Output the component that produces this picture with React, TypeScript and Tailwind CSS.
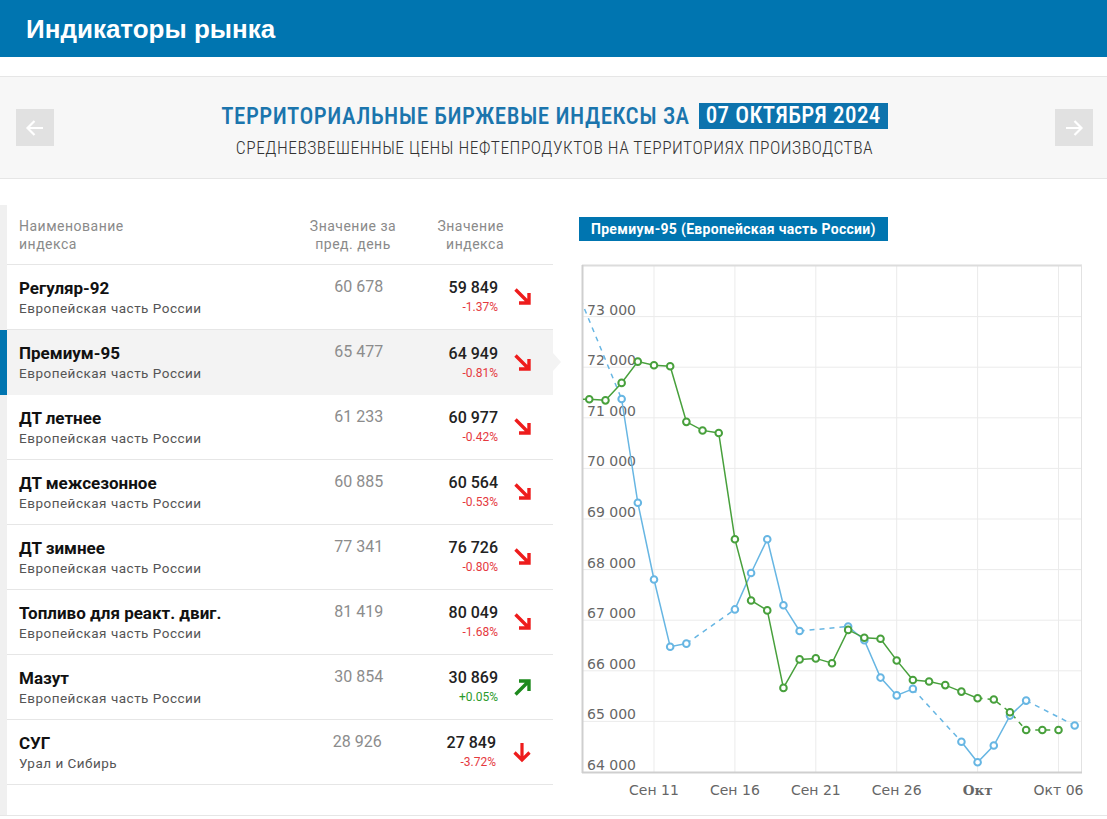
import React from "react";

type Row = {
  name: string;
  sub: string;
  prev: string;
  val: string;
  pct: string;
  dir: "dr" | "ur" | "d";
  active?: boolean;
};

const rows: Row[] = [
  { name: "Регуляр-92", sub: "Европейская часть России", prev: "60 678", val: "59 849", pct: "-1.37%", dir: "dr" },
  { name: "Премиум-95", sub: "Европейская часть России", prev: "65 477", val: "64 949", pct: "-0.81%", dir: "dr", active: true },
  { name: "ДТ летнее", sub: "Европейская часть России", prev: "61 233", val: "60 977", pct: "-0.42%", dir: "dr" },
  { name: "ДТ межсезонное", sub: "Европейская часть России", prev: "60 885", val: "60 564", pct: "-0.53%", dir: "dr" },
  { name: "ДТ зимнее", sub: "Европейская часть России", prev: "77 341", val: "76 726", pct: "-0.80%", dir: "dr" },
  { name: "Топливо для реакт. двиг.", sub: "Европейская часть России", prev: "81 419", val: "80 049", pct: "-1.68%", dir: "dr" },
  { name: "Мазут", sub: "Европейская часть России", prev: "30 854", val: "30 869", pct: "+0.05%", dir: "ur" },
  { name: "СУГ", sub: "Урал и Сибирь", prev: "28 926", val: "27 849", pct: "-3.72%", dir: "d" },
];

function Arrow({ dir }: { dir: Row["dir"] }) {
  if (dir === "ur") {
    return (
      <svg width="20" height="20" viewBox="0 0 20 20">
        <path d="M2.5 17.5 L15.5 4.5 M6 4 H16 V14" fill="none" stroke="#1e8a1e" strokeWidth="3.4" />
      </svg>
    );
  }
  if (dir === "d") {
    return (
      <svg width="22" height="22" viewBox="0 0 22 22">
        <path d="M11 2 V19 M3.5 11.5 L11 19 L18.5 11.5" fill="none" stroke="#ee1c1c" strokeWidth="3.2" />
      </svg>
    );
  }
  return (
    <svg width="20" height="20" viewBox="0 0 20 20">
      <path d="M2.5 2.5 L15.5 15.5 M16 6 V16 H6" fill="none" stroke="#ee1c1c" strokeWidth="3.4" />
    </svg>
  );
}

const X = (d: number) => 654 + (d - 11) * 16.18;
const Y = (v: number) => 772 - (v - 64000) * 0.0506;

type P = [number, number];

const blueSegs: P[][] = [
  [[9, 71371], [10, 69322], [11, 67804], [12, 66476], [13, 66537]],
  [[16, 67213], [17, 67933], [18, 68600], [19, 67294], [20, 66786]],
  [[23, 66875], [24, 66605], [25, 65866], [26, 65514], [27, 65642]],
  [[30, 64599], [31, 64192], [32, 64523], [33, 65115], [34, 65411]],
];
const blueDash: [P, P][] = [
  [[6, 73700], [9, 71371]],
  [[13, 66537], [16, 67213]],
  [[20, 66786], [23, 66875]],
  [[27, 65642], [30, 64599]],
  [[34, 65411], [37, 64920]],
];
const blueMarks: P[] = [...blueSegs.flat(), [37, 64920]];

const greenSolid: P[] = [
  [6, 71366], [7, 71366], [8, 71345], [9, 71690], [10, 72110], [11, 72040], [12, 72020],
  [13, 70920], [14, 70750], [15, 70700], [16, 68600], [17, 67389], [18, 67194], [19, 65662],
  [20, 66225], [21, 66245], [22, 66150], [23, 66808], [24, 66652], [25, 66632], [26, 66205],
  [27, 65818], [28, 65790], [29, 65717], [30, 65589], [31, 65458],
];
const greenDashed: P[] = [[31, 65458], [32, 65433], [33, 65182], [34, 64830], [35, 64830], [36, 64830]];
const greenMarks: P[] = [...greenSolid.slice(1), ...greenDashed.slice(1)];

const pathOf = (pts: P[]) => pts.map((p, i) => `${i ? "L" : "M"}${X(p[0]).toFixed(1)} ${Y(p[1]).toFixed(1)}`).join(" ");

function Chart() {
  const hLines = [65000, 66000, 67000, 68000, 69000, 70000, 71000, 72000, 73000];
  const yLabels = [64000, 65000, 66000, 67000, 68000, 69000, 70000, 71000, 72000, 73000];
  const vLines: [number, string, boolean][] = [
    [11, "Сен 11", false],
    [16, "Сен 16", false],
    [21, "Сен 21", false],
    [26, "Сен 26", false],
    [31, "Окт", true],
    [36, "Окт 06", false],
  ];
  const fmt = (v: number) => `${Math.floor(v / 1000)} 000`;
  const blue = "#67b6e3";
  const green = "#48a03c";
  return (
    <svg width="537" height="560" viewBox="0 0 537 560" className="block">
      <defs>
        <clipPath id="plot">
          <rect x="583" y="265" width="499" height="507" />
        </clipPath>
      </defs>
      <g transform="translate(-570,-255)">
        <rect x="582" y="265" width="500" height="507" fill="#ffffff" />
        {hLines.map((v) => (
          <line key={v} x1="582" x2="1082" y1={Y(v)} y2={Y(v)} stroke="#ebebeb" strokeWidth="1" />
        ))}
        {vLines.map(([d]) => (
          <line key={d} x1={X(d)} x2={X(d)} y1="265" y2="772" stroke="#ebebeb" strokeWidth="1" />
        ))}
        <line x1="582" x2="1082" y1="265.5" y2="265.5" stroke="#dcdcdc" strokeWidth="2" />
        <line x1="1081.5" x2="1081.5" y1="265" y2="772" stroke="#e2e2e2" strokeWidth="1" />
        <line x1="582.5" x2="582.5" y1="265" y2="773" stroke="#cfcfcf" strokeWidth="2" />
        <line x1="582" x2="1082" y1="772.5" y2="772.5" stroke="#cfcfcf" strokeWidth="2" />
        {yLabels.map((v) => (
          <text key={v} x="587" y={Y(v) - 2} fontSize="14" fill="#666" fontFamily="'DejaVu Sans', Verdana, sans-serif">
            {fmt(v)}
          </text>
        ))}
        {vLines.map(([d, label, bold]) => (
          <text
            key={label}
            x={X(d)}
            y="795"
            textAnchor="middle"
            fontSize={bold ? "13.5" : "14"}
            fill="#666"
            fontWeight={bold ? "bold" : "normal"}
            fontFamily={bold ? "'DejaVu Serif', 'Liberation Serif', serif" : "'DejaVu Sans', Verdana, sans-serif"}
          >
            {label}
          </text>
        ))}
        <g clipPath="url(#plot)">
          {blueDash.map((s, i) => (
            <path key={i} d={pathOf(s)} fill="none" stroke={blue} strokeWidth="1.5" strokeDasharray="5 5" />
          ))}
          {blueSegs.map((s, i) => (
            <path key={i} d={pathOf(s)} fill="none" stroke={blue} strokeWidth="1.5" />
          ))}
          <path d={pathOf(greenSolid)} fill="none" stroke={green} strokeWidth="1.5" />
          <path d={pathOf(greenDashed)} fill="none" stroke={green} strokeWidth="1.5" strokeDasharray="5 5" />
          {blueMarks.map((p, i) => (
            <circle key={"b" + i} cx={X(p[0])} cy={Y(p[1])} r="3.3" fill="#fff" stroke={blue} strokeWidth="2" />
          ))}
          {greenMarks.map((p, i) => (
            <circle key={"g" + i} cx={X(p[0])} cy={Y(p[1])} r="3.3" fill="#fff" stroke={green} strokeWidth="2" />
          ))}
        </g>
      </g>
    </svg>
  );
}

export default function App() {
  return (
    <div className="w-[1107px] h-[819px] overflow-hidden bg-white font-['Roboto',sans-serif]">
      <div className="h-[57px] bg-[#0075b0] flex items-center px-[26px]">
        <h1 className="text-white text-[26px] font-bold font-['Liberation_Sans',Arial,sans-serif] leading-none">
          Индикаторы рынка
        </h1>
      </div>
      <div className="mt-[19px] h-[103px] bg-[#f7f7f7] border-y border-[#e6e6e6] flex items-center pl-[16px] pr-[14px]">
        <div className="w-[38px] h-[37px] bg-[#e1e1e1] flex items-center justify-center">
          <svg width="22" height="22" viewBox="0 0 22 22">
            <path d="M19 11 H3.5 M10.5 4 L3.5 11 L10.5 18" fill="none" stroke="#fff" strokeWidth="2.2" />
          </svg>
        </div>
        <div className="flex-1 flex flex-col items-center pt-[6px] font-['Roboto_Condensed','Liberation_Sans_Narrow',Roboto,sans-serif]">
          <div className="flex items-center">
            <span className="text-[#1b75ad] text-[23px] font-medium leading-none tracking-[0.5px]">
              ТЕРРИТОРИАЛЬНЫЕ БИРЖЕВЫЕ ИНДЕКСЫ ЗА
            </span>
            <span className="ml-[9px] bg-[#0d73ad] text-white text-[23px] font-medium leading-[26px] px-[7px] tracking-[0.4px]">
              07 ОКТЯБРЯ 2024
            </span>
          </div>
          <div className="mt-[11px] text-[#333] text-[17.5px] font-light leading-none tracking-[0.5px]">
            СРЕДНЕВЗВЕШЕННЫЕ ЦЕНЫ НЕФТЕПРОДУКТОВ НА ТЕРРИТОРИЯХ ПРОИЗВОДСТВА
          </div>
        </div>
        <div className="w-[38px] h-[37px] bg-[#e1e1e1] flex items-center justify-center">
          <svg width="22" height="22" viewBox="0 0 22 22">
            <path d="M3 11 H18.5 M11.5 4 L18.5 11 L11.5 18" fill="none" stroke="#fff" strokeWidth="2.2" />
          </svg>
        </div>
      </div>
      <div className="h-[637px] border-b border-[#e6e6e6] flex">
        <div className="w-[553px] pt-[26px]">
          <div className="border-l-[7px] border-[#f0f0f0] pb-[30px]">
            <div className="h-[60px] border-b border-[#e6e6e6] flex items-start pt-[12px] pl-[12px] text-[14px] leading-[18px] tracking-[0.5px] text-[#8a8a8a]">
              <div className="w-[275px]">
                Наименование
                <br />
                индекса
              </div>
              <div className="w-[118px] text-center">
                Значение за
                <br />
                пред. день
              </div>
              <div className="w-[92px] text-right">
                Значение
                <br />
                индекса
              </div>
            </div>
            {rows.map((r) => (
              <div
                key={r.name}
                className={
                  r.active
                    ? "relative -ml-[7px] border-l-[7px] border-[#0075b0] bg-[#f3f3f3] h-[65px] flex items-center pl-[12px] pr-[20px]"
                    : "h-[65px] border-b border-[#e6e6e6] flex items-center pl-[12px] pr-[20px]"
                }
              >
                <div className="w-[275px]">
                  <div className="text-[17px] leading-[20px] font-bold text-[#111]">{r.name}</div>
                  <div className="text-[13.5px] leading-[18px] tracking-[0.5px] text-[#555] mt-[1px]">{r.sub}</div>
                </div>
                <div className="w-[90px] self-start pt-[12px] text-right text-[16px] leading-[20px] text-[#8c8c8c]">
                  {r.prev}
                </div>
                <div className="w-[115px] text-right">
                  <div className="text-[16px] leading-[20px] font-medium text-[#222]">{r.val}</div>
                  <div
                    className={
                      r.dir === "ur"
                        ? "text-[12px] leading-[18px] text-[#2a9a2a]"
                        : "text-[12px] leading-[18px] text-[#e5393e]"
                    }
                  >
                    {r.pct}
                  </div>
                </div>
                <div className="ml-[15px] flex items-center">
                  <Arrow dir={r.dir} />
                </div>
                {r.active && (
                  <div className="absolute right-[-8px] top-[23px] w-0 h-0 border-y-[9px] border-y-transparent border-l-[8px] border-l-[#f3f3f3]" />
                )}
              </div>
            ))}
          </div>
        </div>
        <div className="ml-[17px] w-[537px]">
          <div className="mt-[38px] ml-[9px] inline-block bg-[#0075b0] text-white text-[14px] font-bold leading-[24px] px-[12px] tracking-[0.3px]">
            Премиум-95 (Европейская часть России)
          </div>
          <div className="mt-[14px]">
            <Chart />
          </div>
        </div>
      </div>
    </div>
  );
}
